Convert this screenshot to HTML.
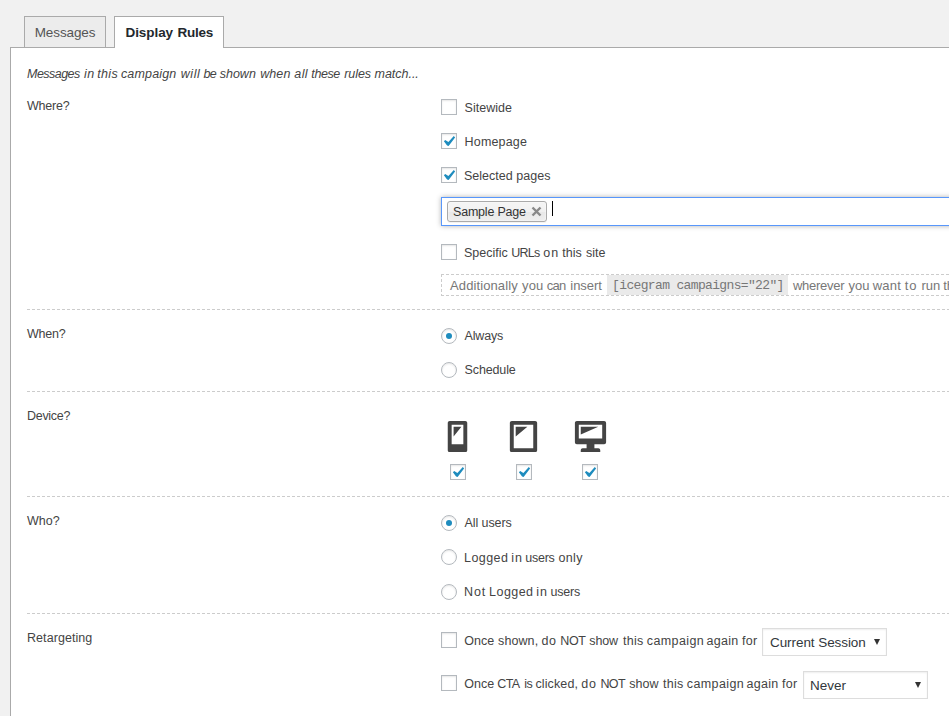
<!DOCTYPE html>
<html lang="en">
<head>
<meta charset="utf-8">
<title>Display Rules</title>
<style>
*{box-sizing:border-box;margin:0;padding:0}
html,body{width:949px;height:716px;overflow:hidden;background:#f1f1f1}
body{position:relative;font-family:"Liberation Sans",sans-serif;font-size:12.5px;color:#444;line-height:16px}
.abs{position:absolute;white-space:nowrap}
#panel{position:absolute;left:10px;top:47px;width:1000px;height:700px;background:#fff;border:1px solid #aaa}
.tab{position:absolute;top:16px;height:32px;border:1px solid #aaa;border-bottom:0;font-size:13.5px;line-height:31px;text-align:center;color:#555}
#tab1{left:24px;width:82px;height:31px;background:#ececec;letter-spacing:-0.19px}
#tab2{left:114px;width:110px;background:#fff;font-weight:bold;color:#23282d;letter-spacing:-0.08px}
.t{position:absolute;white-space:nowrap;line-height:16px;height:16px}
.cb{position:absolute;width:16px;height:16px;border:1px solid #b4b9be;background:#fff;box-shadow:inset 0 1px 2px rgba(0,0,0,.1)}
.cb svg{position:absolute;left:0;top:0;width:14px;height:14px}
.rd{position:absolute;width:16px;height:16px;border:1px solid #b4b9be;border-radius:50%;background:#fff;box-shadow:inset 0 1px 2px rgba(0,0,0,.1)}
.rd.on::after{content:"";position:absolute;left:4px;top:4px;width:6px;height:6px;border-radius:50%;background:#1e8cbe}
.sep{position:absolute;left:27px;width:940px;height:1px;background:repeating-linear-gradient(90deg,#ccc 0,#ccc 3px,transparent 3px,transparent 5px)}
.sel{position:absolute;width:125px;height:28px;border:1px solid #ddd;background:#fff;box-shadow:inset 0 1px 2px rgba(0,0,0,.07);font-size:13.5px;line-height:28px;padding-left:7px;color:#32373c}
.sel i{position:absolute;right:6px;top:10px;width:0;height:0;border-left:3.5px solid transparent;border-right:3.5px solid transparent;border-top:6px solid #333}
.w{position:absolute;left:0;width:949px;height:16px;line-height:16px;white-space:nowrap}
.w span{position:absolute;top:0}
.ico{position:absolute;top:417px;width:39px;height:39px}
</style>
</head>
<body>
<div id="panel"></div>
<div class="tab" id="tab1"></div><div class="w" style="top:24.5px;font-size:13.5px;color:#555"><span style="left:34.69px;letter-spacing:-0.105px">Messages </span></div>
<div class="tab" id="tab2"></div><div class="w" style="top:24.5px;font-size:13.5px;font-weight:bold;color:#23282d"><span style="left:125.46px;letter-spacing:-0.057px">Display </span><span style="left:177.41px;letter-spacing:-0.210px">Rules </span></div>

<div class="w" style="top:66px;font-style:italic"><span style="left:27.08px;letter-spacing:-0.538px">Messages </span><span style="left:84.07px;letter-spacing:0.358px">in </span><span style="left:97.16px;letter-spacing:0.375px">this </span><span style="left:120.95px;letter-spacing:0.160px">campaign </span><span style="left:180.69px;letter-spacing:0.571px">will </span><span style="left:203.46px;letter-spacing:-0.700px">be </span><span style="left:219.73px;letter-spacing:-0.002px">shown </span><span style="left:260.19px;letter-spacing:0.089px">when </span><span style="left:294.34px;letter-spacing:0.400px">all </span><span style="left:311.36px;letter-spacing:-0.431px">these </span><span style="left:344.27px;letter-spacing:-0.091px">rules </span><span style="left:374.57px;letter-spacing:-0.029px">match... </span></div>

<div class="t" style="left:27px;top:98px;letter-spacing:-0.2px">Where?</div>
<div class="cb" style="left:441px;top:99px"></div><div class="t" style="left:464.6px;top:100px">Sitewide</div>
<div class="cb" style="left:441px;top:133px"><svg viewBox="0 0 14 14"><path d="M1.9 7.2L3.2 5.9L6.4 8.1L11.8 2L13.1 3.4L6.6 11.9L5.1 11.6Z" fill="#1e8cbe"/></svg></div><div class="t" style="left:464.6px;top:134px;letter-spacing:0.16px">Homepage</div>
<div class="cb" style="left:441px;top:167px"><svg viewBox="0 0 14 14"><path d="M1.9 7.2L3.2 5.9L6.4 8.1L11.8 2L13.1 3.4L6.6 11.9L5.1 11.6Z" fill="#1e8cbe"/></svg></div><div class="w" style="top:168px;"><span style="left:463.91px;letter-spacing:0.037px">Selected </span><span style="left:516.16px;letter-spacing:0.074px">pages </span></div>

<div class="abs" id="chosen" style="left:441px;top:197px;width:560px;height:29px;border:1px solid #5897fb;background:#fff;box-shadow:0 0 5px rgba(0,0,0,.3)"></div>
<div class="abs" id="chip" style="left:447px;top:201px;width:100px;height:21px;border:1px solid #aaa;border-radius:3px;background:linear-gradient(#f4f4f4 20%,#f0f0f0 50%,#e8e8e8 52%,#eee 100%);box-shadow:0 0 2px #fff inset,0 1px 0 rgba(0,0,0,.05);color:#333;padding-left:5px;line-height:20px"><span class="t2" style="letter-spacing:-0.2px">Sample Page</span><svg style="position:absolute;left:83px;top:4px" width="11" height="11" viewBox="0 0 11 11"><path d="M1.5 1.5l8 8M9.5 1.5l-8 8" stroke="#888" stroke-width="2.4" fill="none"/></svg></div>
<div class="abs" style="left:552px;top:201px;width:1px;height:15px;background:#000"></div>

<div class="cb" style="left:441px;top:244px"></div><div class="w" style="top:245px;"><span style="left:463.91px;letter-spacing:0.025px">Specific </span><span style="left:511.20px;letter-spacing:-0.700px">URLs </span><span style="left:543.30px;letter-spacing:0.900px">on </span><span style="left:562.15px;letter-spacing:0.036px">this </span><span style="left:585.89px;letter-spacing:0.037px">site </span></div>

<div class="abs" id="hint" style="left:441px;top:274px;width:560px;height:22px;
 background:
 repeating-linear-gradient(90deg,#ccc 0,#ccc 3px,transparent 3px,transparent 5px) 0 0/100% 1px no-repeat,
 repeating-linear-gradient(90deg,#ccc 0,#ccc 3px,transparent 3px,transparent 5px) 0 100%/100% 1px no-repeat,
 repeating-linear-gradient(180deg,#ccc 0,#ccc 3px,transparent 3px,transparent 5px) 0 0/1px 100% no-repeat"></div>
<div class="w" style="top:278.2px;font-size:13px;color:#777"><span style="left:450.04px;letter-spacing:0.105px">Additionally </span><span style="left:522.05px;letter-spacing:0.140px">you </span><span style="left:546.79px;letter-spacing:-0.700px">can </span><span style="left:570.32px;letter-spacing:-0.063px">insert </span></div>
<code class="abs" style="left:607px;top:275px;width:181px;height:20px;line-height:22px;font-family:'Liberation Mono',monospace;font-size:13px;letter-spacing:-0.65px;background:#eaeaea;padding-left:5.1px;color:#777">[icegram campaigns="22"]</code>
<div class="w" style="top:278.2px;font-size:13px;color:#777"><span style="left:793.00px;letter-spacing:-0.273px">wherever </span><span style="left:848.45px;letter-spacing:0.063px">you </span><span style="left:872.70px;letter-spacing:0.270px">want </span><span style="left:904.81px;letter-spacing:0.900px">to </span><span style="left:921.61px;letter-spacing:-0.082px">run </span><span style="left:943.31px;letter-spacing:-0.067px">this </span><span style="left:966.99px;letter-spacing:0.189px">campaign </span></div>

<div class="sep" style="top:309px"></div>
<div class="t" style="left:27px;top:326px;letter-spacing:-0.2px">When?</div>
<div class="rd on" style="left:441px;top:328px"></div><div class="t" style="left:464.6px;top:328px;letter-spacing:-0.2px">Always</div>
<div class="rd" style="left:441px;top:362px"></div><div class="t" style="left:464.6px;top:362px;letter-spacing:-0.14px">Schedule</div>

<div class="sep" style="top:391px"></div>
<div class="t" style="left:27px;top:408px;letter-spacing:-0.3px">Device?</div>
<svg class="ico" style="left:438.4px" viewBox="0 0 20 20"><path fill="#444" fill-rule="evenodd" d="M6 2h8c.55 0 1 .45 1 1v14c0 .55-.45 1-1 1H6c-.55 0-1-.45-1-1V3c0-.55.45-1 1-1zm7 12V4H7v10h6zM8 5h4l-4 5V5z"/></svg>
<svg class="ico" style="left:504.3px" viewBox="0 0 20 20"><path fill="#444" fill-rule="evenodd" d="M4 2h12c.55 0 1 .45 1 1v14c0 .55-.45 1-1 1H4c-.55 0-1-.45-1-1V3c0-.55.45-1 1-1zm11 14V4H5v12h10zM6 5h6l-6 5V5z"/></svg>
<svg class="ico" style="left:570.5px" viewBox="0 0 20 20"><path fill="#444" fill-rule="evenodd" d="M3 2h14c.55 0 1 .45 1 1v10c0 .55-.45 1-1 1h-5v2h2c.55 0 1 .45 1 1v1H5v-1c0-.55.45-1 1-1h2v-2H3c-.55 0-1-.45-1-1V3c0-.55.45-1 1-1zm13 9V4H4v7h12zM5 5h9L5 9V5z"/></svg>
<div class="cb" style="left:450px;top:464px"><svg viewBox="0 0 14 14"><path d="M1.9 7.2L3.2 5.9L6.4 8.1L11.8 2L13.1 3.4L6.6 11.9L5.1 11.6Z" fill="#1e8cbe"/></svg></div>
<div class="cb" style="left:516px;top:464px"><svg viewBox="0 0 14 14"><path d="M1.9 7.2L3.2 5.9L6.4 8.1L11.8 2L13.1 3.4L6.6 11.9L5.1 11.6Z" fill="#1e8cbe"/></svg></div>
<div class="cb" style="left:582px;top:464px"><svg viewBox="0 0 14 14"><path d="M1.9 7.2L3.2 5.9L6.4 8.1L11.8 2L13.1 3.4L6.6 11.9L5.1 11.6Z" fill="#1e8cbe"/></svg></div>

<div class="sep" style="top:496px"></div>
<div class="t" style="left:27px;top:513px">Who?</div>
<div class="rd on" style="left:441px;top:515px"></div><div class="t" style="left:464.6px;top:515px;letter-spacing:-0.1px">All users</div>
<div class="rd" style="left:441px;top:549px"></div><div class="w" style="top:550px;"><span style="left:464.10px;letter-spacing:0.416px">Logged </span><span style="left:511.35px;letter-spacing:0.900px">in </span><span style="left:525.29px;letter-spacing:-0.245px">users </span><span style="left:558.40px;letter-spacing:0.401px">only </span></div>
<div class="rd" style="left:441px;top:584px"></div><div class="w" style="top:584px;"><span style="left:464.10px;letter-spacing:0.830px">Not </span><span style="left:489.10px;letter-spacing:0.440px">Logged </span><span style="left:536.35px;letter-spacing:0.900px">in </span><span style="left:550.39px;letter-spacing:-0.161px">users </span></div>

<div class="sep" style="top:613px"></div>
<div class="t" style="left:27px;top:630px;letter-spacing:0.07px">Retargeting</div>
<div class="cb" style="left:441px;top:632px"></div><div class="w" style="top:633px;"><span style="left:464.26px;letter-spacing:0.057px">Once </span><span style="left:498.09px;letter-spacing:0.086px">shown, </span><span style="left:541.40px;letter-spacing:0.607px">do </span><span style="left:560.30px;letter-spacing:-0.409px">NOT </span><span style="left:589.29px;letter-spacing:-0.137px">show </span><span style="left:623.05px;letter-spacing:0.264px">this </span><span style="left:646.80px;letter-spacing:0.402px">campaign </span><span style="left:706.49px;letter-spacing:0.312px">again </span><span style="left:741.92px;letter-spacing:0.315px">for </span></div>
<div class="sel" style="left:762px;top:628px"><span class="t2" style="letter-spacing:-0.07px">Current Session</span><i></i></div>
<div class="cb" style="left:441px;top:675px"></div><div class="w" style="top:676px;"><span style="left:464.26px;letter-spacing:0.057px">Once </span><span style="left:497.30px;letter-spacing:-0.606px">CTA </span><span style="left:524.35px;letter-spacing:-0.667px">is </span><span style="left:535.40px;letter-spacing:0.125px">clicked, </span><span style="left:581.30px;letter-spacing:0.864px">do </span><span style="left:600.40px;letter-spacing:-0.609px">NOT </span><span style="left:629.19px;letter-spacing:0.094px">show </span><span style="left:662.95px;letter-spacing:0.303px">this </span><span style="left:686.80px;letter-spacing:0.402px">campaign </span><span style="left:746.49px;letter-spacing:0.312px">again </span><span style="left:781.92px;letter-spacing:0.315px">for </span></div>
<div class="sel" style="left:803px;top:671px;padding-left:6px"><span class="t2">Never</span><i></i></div>
</body>
</html>
